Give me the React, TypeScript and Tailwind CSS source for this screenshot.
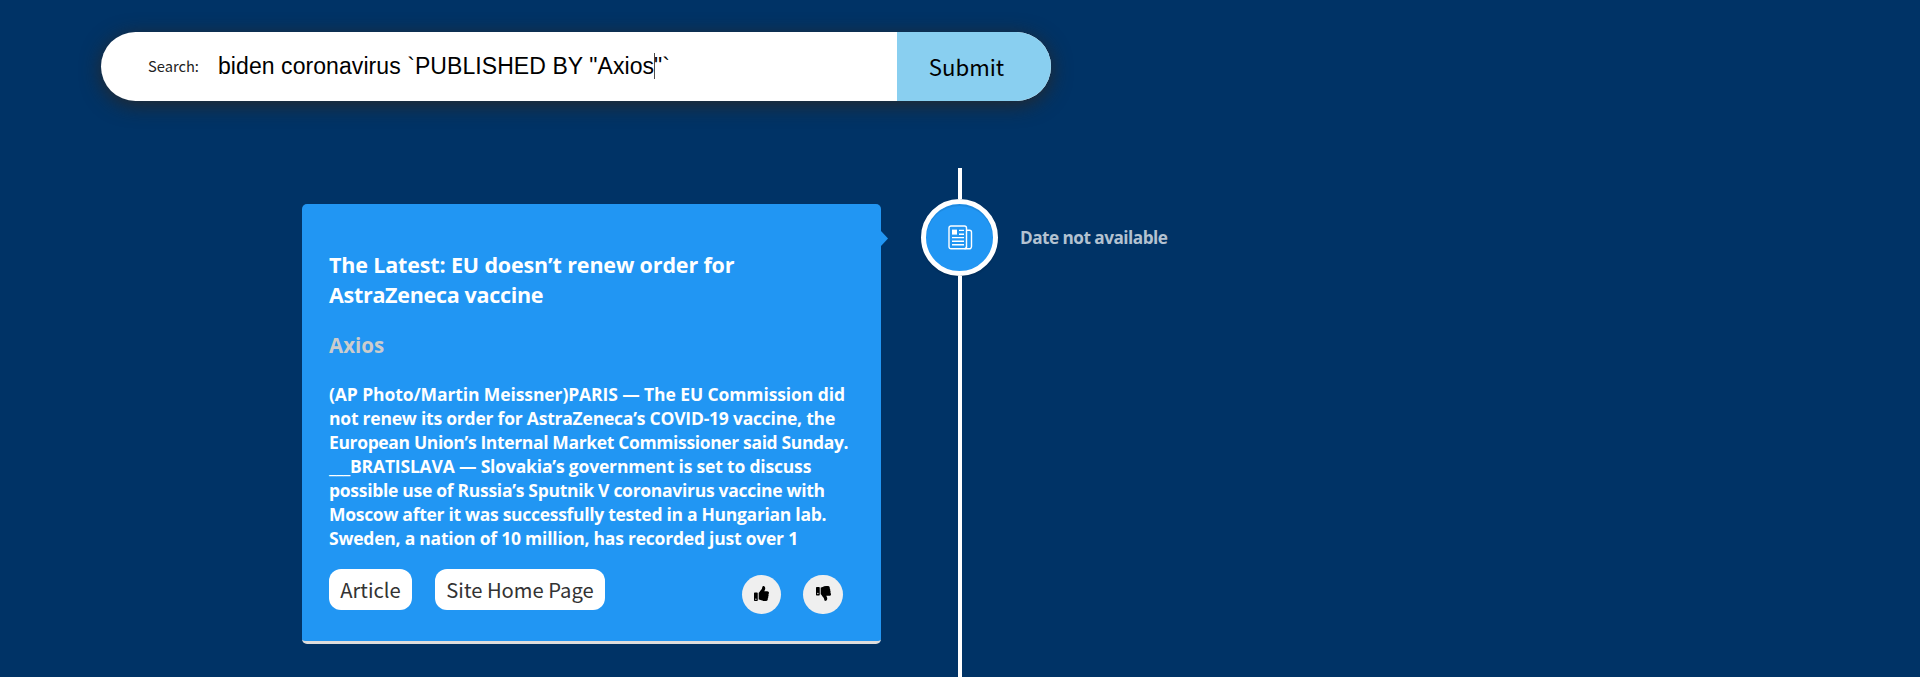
import { FaThumbsDown, FaThumbsUp } from "react-icons/fa";

const excerpt = [
  { text: "(AP Photo/Martin Meissner)PARIS — The EU Commission did", tracking: "tracking-[-0.1px]" },
  { text: "not renew its order for AstraZeneca’s COVID-19 vaccine, the", tracking: "tracking-[-0.22px]" },
  { text: "European Union’s Internal Market Commissioner said Sunday.", tracking: "tracking-[-0.36px]" },
  { text: "___BRATISLAVA — Slovakia’s government is set to discuss", tracking: "tracking-[-0.18px]" },
  { text: "possible use of Russia’s Sputnik V coronavirus vaccine with", tracking: "tracking-[-0.29px]" },
  { text: "Moscow after it was successfully tested in a Hungarian lab.", tracking: "tracking-[-0.29px]" },
  { text: "Sweden, a nation of 10 million, has recorded just over 1", tracking: "tracking-[-0.22px]" },
];

function NewspaperIcon() {
  return (
    <svg width="25" height="25" viewBox="0 0 25 25" fill="none" stroke="white" strokeWidth="1.4">
      <rect x="1" y="1" width="17.5" height="22.8" rx="2" />
      <path d="M18.5 5.2h3a2 2 0 0 1 2 2v14.4a2.2 2.2 0 0 1-2.2 2.2H16.5c1.4 0 2-1 2-2.2" />
      <rect x="4" y="4.6" width="5" height="5" fill="white" stroke="none" />
      <path d="M11 5.4h5M11 9.2h5M4 12.6h12M4 16.2h12M4 19.8h12" />
    </svg>
  );
}

function SearchBar() {
  return (
    <form
      className="ml-[101px] flex h-[69px] w-[950px] overflow-hidden rounded-full bg-white shadow-[0_4px_20px_0_rgba(40,40,40,0.95)]"
      onSubmit={(e) => e.preventDefault()}
    >
      <div className="flex flex-1 items-center pb-0.5 pl-[47px] text-black">
        <span className="w-[70px] pt-px font-['Noto_Sans_CJK_SC',sans-serif] text-[14.7px] text-[#222]">Search:</span>
        <span className="relative whitespace-pre font-['Liberation_Sans',sans-serif] text-[23px] leading-[26px] tracking-[0.07px]">
          biden coronavirus `PUBLISHED BY "Axios
          <span className="mr-[-1px] inline-block h-[26px] w-px bg-black/70 align-[-5px]" />
          "`
        </span>
      </div>
      <button
        type="submit"
        className="w-[154px] bg-[#89cff0] pr-[15px] pt-px font-['Noto_Sans_CJK_SC',sans-serif] text-[22.2px] text-black"
      >
        Submit
      </button>
    </form>
  );
}

function NewsCard() {
  return (
    <article className="relative mt-9 flex h-[440px] w-[579px] flex-col rounded-[5px] border-b-[3px] border-[#ddd] bg-[#2196f3] px-[27px] font-['Open_Sans',sans-serif] font-bold text-white">
      <span className="absolute left-full top-[27px] h-[15px] w-[7px] bg-[#2196f3] [clip-path:polygon(0_0,100%_50%,0_100%)]" />
      <h3 className="mt-[46px] text-[21.5px] leading-[30px] tracking-[-0.15px]">
        The Latest: EU doesn’t renew order for
        <br />
        <span className="tracking-[-0.3px]">AstraZeneca vaccine</span>
      </h3>
      <h4 className="mt-5 text-[20.5px] leading-[30px] text-[#ccc]">Axios</h4>
      <div className="mt-[22px] whitespace-nowrap text-[17.5px] leading-6">
        {excerpt.map((line) => (
          <p key={line.text} className={line.tracking}>
            {line.text}
          </p>
        ))}
      </div>
      <div className="mt-[19px] flex font-['Noto_Sans_CJK_SC',sans-serif] text-[20.2px] font-normal text-[#333]">
        <a className="flex h-[41px] w-[83px] items-center justify-center rounded-[12px] bg-white pt-0.5">Article</a>
        <a className="ml-[23px] flex h-[41px] w-[170px] items-center justify-center whitespace-nowrap rounded-[12px] bg-white pt-0.5">
          Site Home Page
        </a>
        <button className="ml-[137px] mt-1.5 flex size-[39px] items-center justify-center rounded-full bg-[#efefef] pb-0.5 text-black">
          <FaThumbsUp size={15} />
        </button>
        <button className="ml-[22px] mt-1.5 flex h-[39px] w-10 items-center justify-center rounded-full bg-[#efefef] pb-0.5 text-black">
          <FaThumbsDown size={15} />
        </button>
      </div>
    </article>
  );
}

export default function App() {
  return (
    <div className="h-[677px] overflow-hidden bg-[#003366] pt-8">
      <SearchBar />
      <main className="mt-[67px] flex h-[509px] pl-[302px]">
        <NewsCard />
        <div className="ml-10 flex w-[78px] shrink-0 flex-col items-center">
          <div className="h-[31px] w-1 shrink-0 bg-white" />
          <div className="mr-px flex size-[77px] shrink-0 items-center justify-center rounded-full border-[5px] border-white bg-[#2196f3] pl-0.5 shadow-[inset_0_2px_0_rgba(0,0,0,0.08),0_2px_2px_0_rgba(0,0,0,0.1)]">
            <NewspaperIcon />
          </div>
          <div className="w-1 flex-1 bg-white" />
        </div>
        <span className="ml-[21px] mt-[58px] font-['Open_Sans',sans-serif] text-[17.2px] font-bold leading-6 tracking-[-0.52px] text-[#b3c2d1]">
          Date not available
        </span>
      </main>
    </div>
  );
}
